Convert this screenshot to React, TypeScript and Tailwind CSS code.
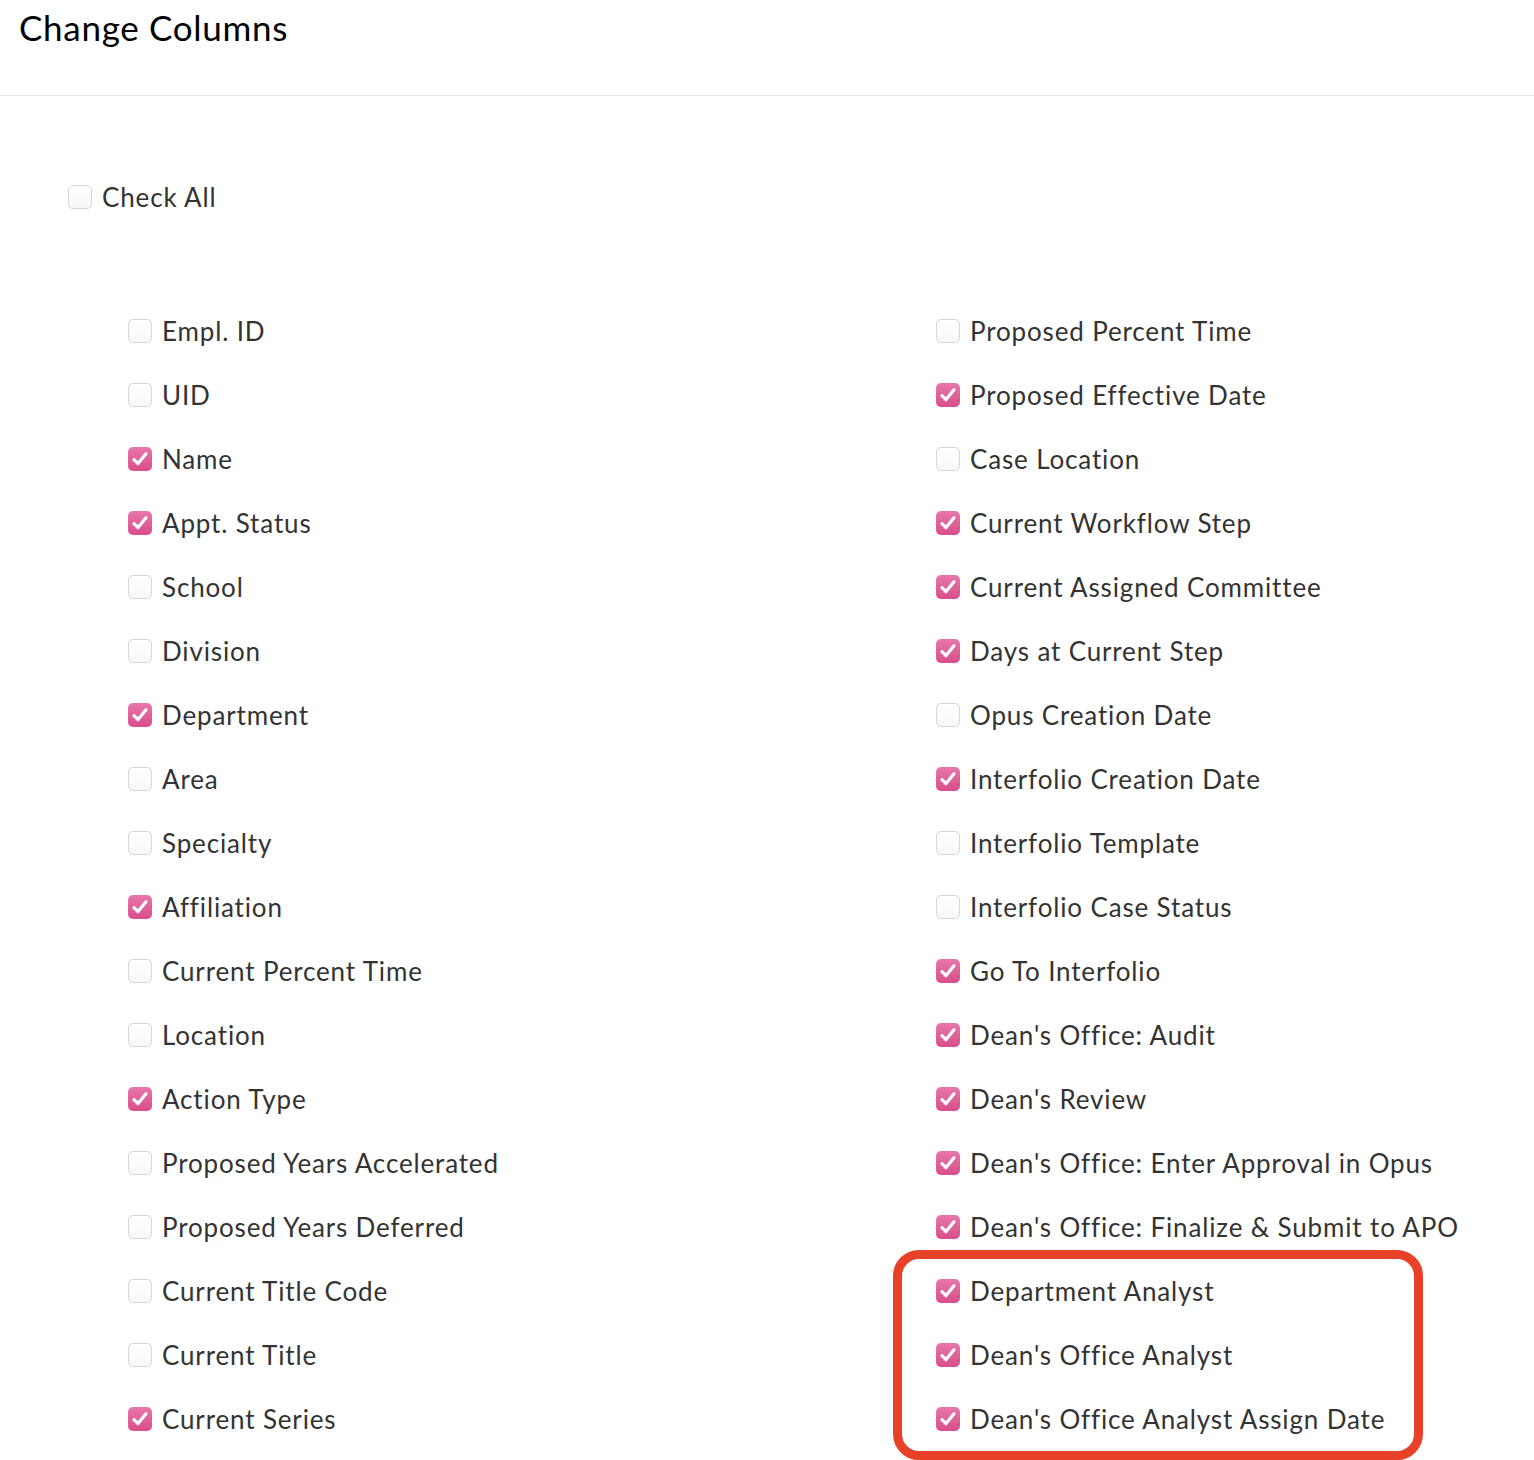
import React from "react";

type Col = { label: string; checked: boolean };

const left: Col[] = [
  { label: "Empl. ID", checked: false },
  { label: "UID", checked: false },
  { label: "Name", checked: true },
  { label: "Appt. Status", checked: true },
  { label: "School", checked: false },
  { label: "Division", checked: false },
  { label: "Department", checked: true },
  { label: "Area", checked: false },
  { label: "Specialty", checked: false },
  { label: "Affiliation", checked: true },
  { label: "Current Percent Time", checked: false },
  { label: "Location", checked: false },
  { label: "Action Type", checked: true },
  { label: "Proposed Years Accelerated", checked: false },
  { label: "Proposed Years Deferred", checked: false },
  { label: "Current Title Code", checked: false },
  { label: "Current Title", checked: false },
  { label: "Current Series", checked: true },
];

const right: Col[] = [
  { label: "Proposed Percent Time", checked: false },
  { label: "Proposed Effective Date", checked: true },
  { label: "Case Location", checked: false },
  { label: "Current Workflow Step", checked: true },
  { label: "Current Assigned Committee", checked: true },
  { label: "Days at Current Step", checked: true },
  { label: "Opus Creation Date", checked: false },
  { label: "Interfolio Creation Date", checked: true },
  { label: "Interfolio Template", checked: false },
  { label: "Interfolio Case Status", checked: false },
  { label: "Go To Interfolio", checked: true },
  { label: "Dean's Office: Audit", checked: true },
  { label: "Dean's Review", checked: true },
  { label: "Dean's Office: Enter Approval in Opus", checked: true },
  { label: "Dean's Office: Finalize & Submit to APO", checked: true },
];

// annotated rows at the bottom of the right column
const highlighted: Col[] = [
  { label: "Department Analyst", checked: true },
  { label: "Dean's Office Analyst", checked: true },
  { label: "Dean's Office Analyst Assign Date", checked: true },
];

function Box({ checked }: { checked: boolean }) {
  if (checked) {
    return (
      <span className="flex h-[24px] w-[24px] shrink-0 items-center justify-center rounded-[5px] bg-gradient-to-b from-[#e677aa] to-[#d94d8c]">
        <svg width="18" height="18" viewBox="0 0 18 18" fill="none">
          <path d="M3 9.6 L7 13.6 L15 3.8" stroke="white" strokeWidth="3.2" strokeLinecap="round" strokeLinejoin="round" />
        </svg>
      </span>
    );
  }
  return <span className="h-[24px] w-[24px] shrink-0 rounded-[5px] border border-[#d6d6d6] bg-gradient-to-b from-white to-[#f7f7f7]" />;
}

function Row({ col }: { col: Col }) {
  return (
    <div className="flex h-16 items-center gap-[10px]">
      <Box checked={col.checked} />
      <span className="text-[26px] leading-none tracking-[0.85px] text-[#333]">{col.label}</span>
    </div>
  );
}

export default function App() {
  return (
    <div className="min-h-[1460px] bg-white font-['Lato',sans-serif]">
      <div className="h-[96px] border-b border-[#e2e2e2] pl-[19px] pt-[5px]">
        <h1 className="text-[35px] leading-[44px] tracking-[0.7px] text-black">Change Columns</h1>
      </div>
      <div className="pl-[68px] pt-[69px]">
        <div className="flex h-16 items-center gap-[10px]">
          <Box checked={false} />
          <span className="text-[26px] leading-none tracking-[0.85px] text-[#333]">Check All</span>
        </div>
      </div>
      <div className="grid grid-cols-[808px_1fr] pl-[128px] pt-[70px]">
        <div className="flex flex-col">
          {left.map((c) => (
            <Row key={c.label} col={c} />
          ))}
        </div>
        <div className="flex flex-col">
          {right.map((c) => (
            <Row key={c.label} col={c} />
          ))}
          <div className="relative">
            <div className="pointer-events-none absolute -left-[43px] -top-[9px] h-[210px] w-[530px] rounded-[26px] border-[9px] border-[#e8412a]" />
            {highlighted.map((c) => (
              <Row key={c.label} col={c} />
            ))}
          </div>
        </div>
      </div>
    </div>
  );
}
